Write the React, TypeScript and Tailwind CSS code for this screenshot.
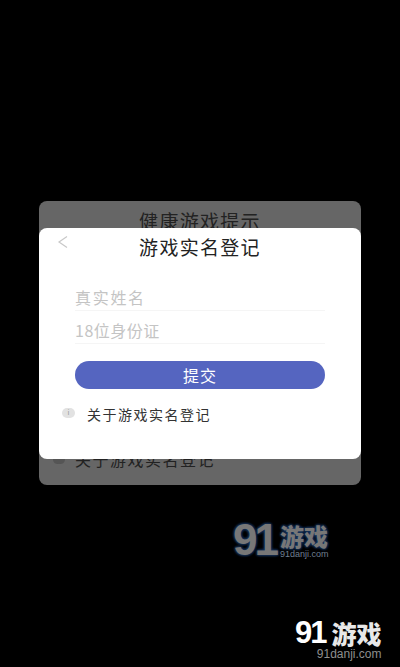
import React from 'react';

const CJK = `font-['Noto_Sans_CJK_SC','Noto_Sans',sans-serif]`;

export default function App() {
  return (
    <div className={`relative h-[667px] w-[400px] overflow-hidden bg-black px-[39px] pt-[201px] ${CJK}`}>
      {/* 뒤쪽 다이얼로그 */}
      <div className="relative flex h-[284px] flex-col rounded-lg bg-[#666666] text-[#222222]">
        <p className="pt-[8px] text-center text-[19px] leading-[24px] tracking-[1.3px]">健康游戏提示</p>
        <div className="mt-auto flex items-center gap-[10px] pb-[16px] pl-[14px]">
          <span className="h-[9px] w-[12px] rounded-full bg-[#555555]" />
          <span className="text-[16px] leading-[20px] tracking-[1.5px]">关于游戏实名登记</span>
        </div>

        {/* 앞쪽 다이얼로그 */}
        <div className="absolute inset-x-0 top-[27px] flex h-[231px] flex-col rounded-lg bg-white px-[36px]">
          <svg className="absolute left-[18px] top-[7px]" width="12" height="14" viewBox="0 0 12 14" fill="none">
            <path d="M10 1.5 2 7l8 5.5" stroke="#c8c8c8" strokeWidth="1.2" />
          </svg>
          <p className="pt-[7px] text-center text-[19px] leading-[24px] tracking-[1.3px] text-[#222222]">游戏实名登记</p>
          <div className="mt-[18px] flex h-[34px] items-center border-b border-[#f5f5f5] pt-[7px] text-[16px] tracking-[1.7px] text-[#c4c4c4]">真实姓名</div>
          <div className="flex h-[33px] items-center border-b border-[#f5f5f5] pt-[6px] text-[16px] tracking-[0.5px] text-[#c4c4c4]">18位身份证</div>
          <button className="mt-[17px] h-[28px] w-full rounded-full bg-[#5565c0] text-[16px] leading-[26px] tracking-[1px] text-white">提交</button>
          <div className="mt-[15px] flex items-center">
            <span className="-ml-[13px] -mt-[3px] flex h-[10px] w-[13px] items-center justify-center rounded-full bg-[#e2e2e2] text-[7px] leading-none text-[#999999]">i</span>
            <span className="ml-[12px] text-[14px] leading-[20px] tracking-[1.5px] text-[#333333]">关于游戏实名登记</span>
          </div>
        </div>
      </div>

      {/* 워터마크 */}
      <div className="absolute left-[233px] top-[521px] flex items-center">
        <span className="font-['Liberation_Sans',sans-serif] font-bold text-[44px] leading-[38px] tracking-[-3px] text-[#777777] [text-shadow:0_0_3px_#16345f,0_0_3px_#16345f,0_0_3px_#16345f]">91</span>
        <div className="ml-[4px] flex flex-col">
          <span className="font-['Noto_Sans_CJK_SC',sans-serif] font-black text-[24px] leading-[27px] text-[#777777] [text-shadow:0_0_3px_#16345f,0_0_3px_#16345f,0_0_3px_#16345f]">游戏</span>
          <span className="font-['Liberation_Sans',sans-serif] text-[9px] leading-[10px] text-[#6f7f90]">91danji.com</span>
        </div>
      </div>
      <div className="absolute left-[295px] top-[619px] flex flex-col items-end">
        <div className="flex items-center">
          <span className="font-['Liberation_Sans',sans-serif] font-bold text-[31px] leading-[28px] tracking-[-2px] text-white">91</span>
          <span className="ml-[6px] font-['Noto_Sans_CJK_SC',sans-serif] font-black text-[25px] leading-[28px] text-[#e8e8e8]">游戏</span>
        </div>
        <span className="font-['Liberation_Sans',sans-serif] text-[12px] leading-[14px] text-[#8f8f8f]">91danji.com</span>
      </div>
    </div>
  );
}
